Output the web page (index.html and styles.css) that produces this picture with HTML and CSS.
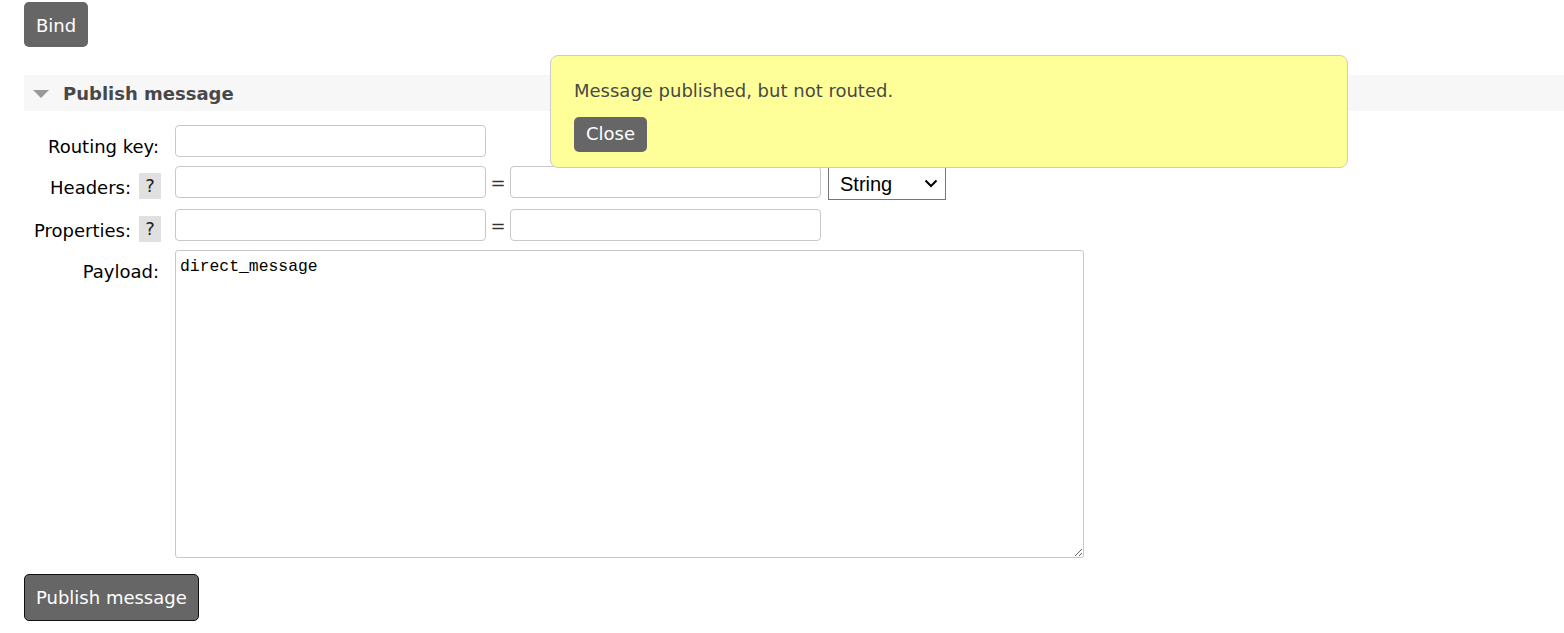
FILE: index.html
```html
<!DOCTYPE html>
<html>
<head>
<meta charset="utf-8">
<title>Publish message</title>
<link rel="stylesheet" href="styles.css">
</head>
<body>
<div class="page">
  <button class="btn btn-bind">Bind</button>

  <div class="section">
    <h2 class="section-title"><span class="tri"></span>Publish message</h2>
    <form class="form">
      <div class="row">
        <div class="label"><label>Routing key:</label></div>
        <input class="field" type="text">
      </div>
      <div class="row">
        <div class="label"><label>Headers:</label><span class="help">?</span></div>
        <input class="field" type="text">
        <span class="eq">=</span>
        <input class="field" type="text">
        <span class="select-wrap">
          <select class="select"><option>String</option></select>
          <svg class="chev" width="14" height="9" viewBox="0 0 14 9"><path d="M1.5 1.5 L7 7 L12.5 1.5" fill="none" stroke="#000" stroke-width="2"/></svg>
        </span>
      </div>
      <div class="row row-props">
        <div class="label"><label>Properties:</label><span class="help">?</span></div>
        <input class="field" type="text">
        <span class="eq">=</span>
        <input class="field" type="text">
      </div>
      <div class="row row-payload">
        <div class="label"><label>Payload:</label></div>
        <textarea class="payload">direct_message</textarea>
      </div>
      <button type="button" class="btn btn-publish">Publish message</button>
    </form>
  </div>

  <div class="notice">
    <p class="notice-text">Message published, but not routed.</p>
    <button class="btn btn-close">Close</button>
  </div>
</div>
</body>
</html>
```
FILE: styles.css
```css
html, body {
  margin: 0;
  padding: 0;
  background: #fff;
}
body {
  font-family: "DejaVu Sans", Verdana, sans-serif;
  font-size: 18px;
  color: #000;
}
.page {
  position: relative;
  padding: 2px 0 0 24px;
}
.btn {
  display: block;
  font-family: "DejaVu Sans", Verdana, sans-serif;
  font-size: 18px;
  line-height: 21px;
  color: #fff;
  background: #666;
  border: none;
  border-radius: 5px;
  padding: 12px 12px;
  cursor: pointer;
}
.btn-bind {
  margin: 0;
  padding: 13px 12px 11px;
}
.section {
  margin-top: 28px;
}
.section-title {
  display: flex;
  align-items: center;
  margin: 0;
  height: 36px;
  background: #f7f7f7;
  font-size: 18px;
  font-weight: bold;
  color: #484848;
  padding-left: 9px;
}
.tri {
  width: 0;
  height: 0;
  border-left: 8px solid transparent;
  border-right: 8px solid transparent;
  border-top: 8px solid #999;
  margin-right: 14px;
  margin-top: 1px;
}
.form {
  margin-top: 14px;
}
.row {
  display: flex;
  align-items: flex-start;
  margin-bottom: 9px;
}
.row-props {
  margin-bottom: 8px;
}
.row-payload {
  margin-bottom: 16px;
}
.label {
  width: 136px;
  display: flex;
  justify-content: flex-end;
  align-items: flex-start;
  margin-right: 15px;
}
.label label {
  line-height: 21px;
  padding-top: 11px;
  margin-right: 1px;
}
.help {
  display: block;
  width: 22px;
  height: 26px;
  line-height: 26px;
  margin-top: 7px;
  margin-left: 7px;
  margin-right: -1px;
  text-align: center;
  background: #e0e0e0;
  color: #222;
  font-size: 18px;
}
.field {
  box-sizing: border-box;
  width: 311px;
  height: 32px;
  border: 1px solid #c8c8c8;
  border-radius: 4px;
  margin: 0;
  padding: 2px 6px;
  font-family: "DejaVu Sans", Verdana, sans-serif;
  font-size: 18px;
  background: #fff;
}
.eq {
  width: 24px;
  text-align: center;
  line-height: 21px;
  padding-top: 6px;
  color: #333;
}
.select-wrap {
  position: relative;
  margin-left: 7px;
  margin-top: 1px;
}
.select {
  -webkit-appearance: none;
  appearance: none;
  box-sizing: border-box;
  width: 118px;
  height: 33px;
  border: 1px solid #767676;
  border-radius: 0;
  background: #fff;
  font-family: "Liberation Sans", Arial, sans-serif;
  font-size: 20px;
  color: #000;
  padding: 0 0 0 11px;
  margin: 0;
}
.chev {
  position: absolute;
  right: 8px;
  top: 12px;
  pointer-events: none;
}
.payload {
  box-sizing: border-box;
  width: 909px;
  height: 308px;
  border: 1px solid #c8c8c8;
  border-radius: 3px;
  padding: 5px 4px;
  margin: 0;
  font-family: "Liberation Mono", "Courier New", monospace;
  font-size: 16.4px;
  line-height: 21px;
  color: #000;
  resize: both;
}
.btn-publish {
  border: 1.5px solid #111;
  padding: 12px 11px 12px;
  line-height: 21px;
}
.notice {
  position: absolute;
  left: 550px;
  top: 55px;
  box-sizing: border-box;
  width: 798px;
  height: 113px;
  background: #ffff99;
  border: 1px solid #ccc;
  border-radius: 8px;
  padding: 24px 23px 0;
}
.notice-text {
  margin: 0 0 16px 0;
  line-height: 21px;
  color: #484848;
}
.btn-close {
  padding: 6px 12px 8px;
  line-height: 21px;
}
```
